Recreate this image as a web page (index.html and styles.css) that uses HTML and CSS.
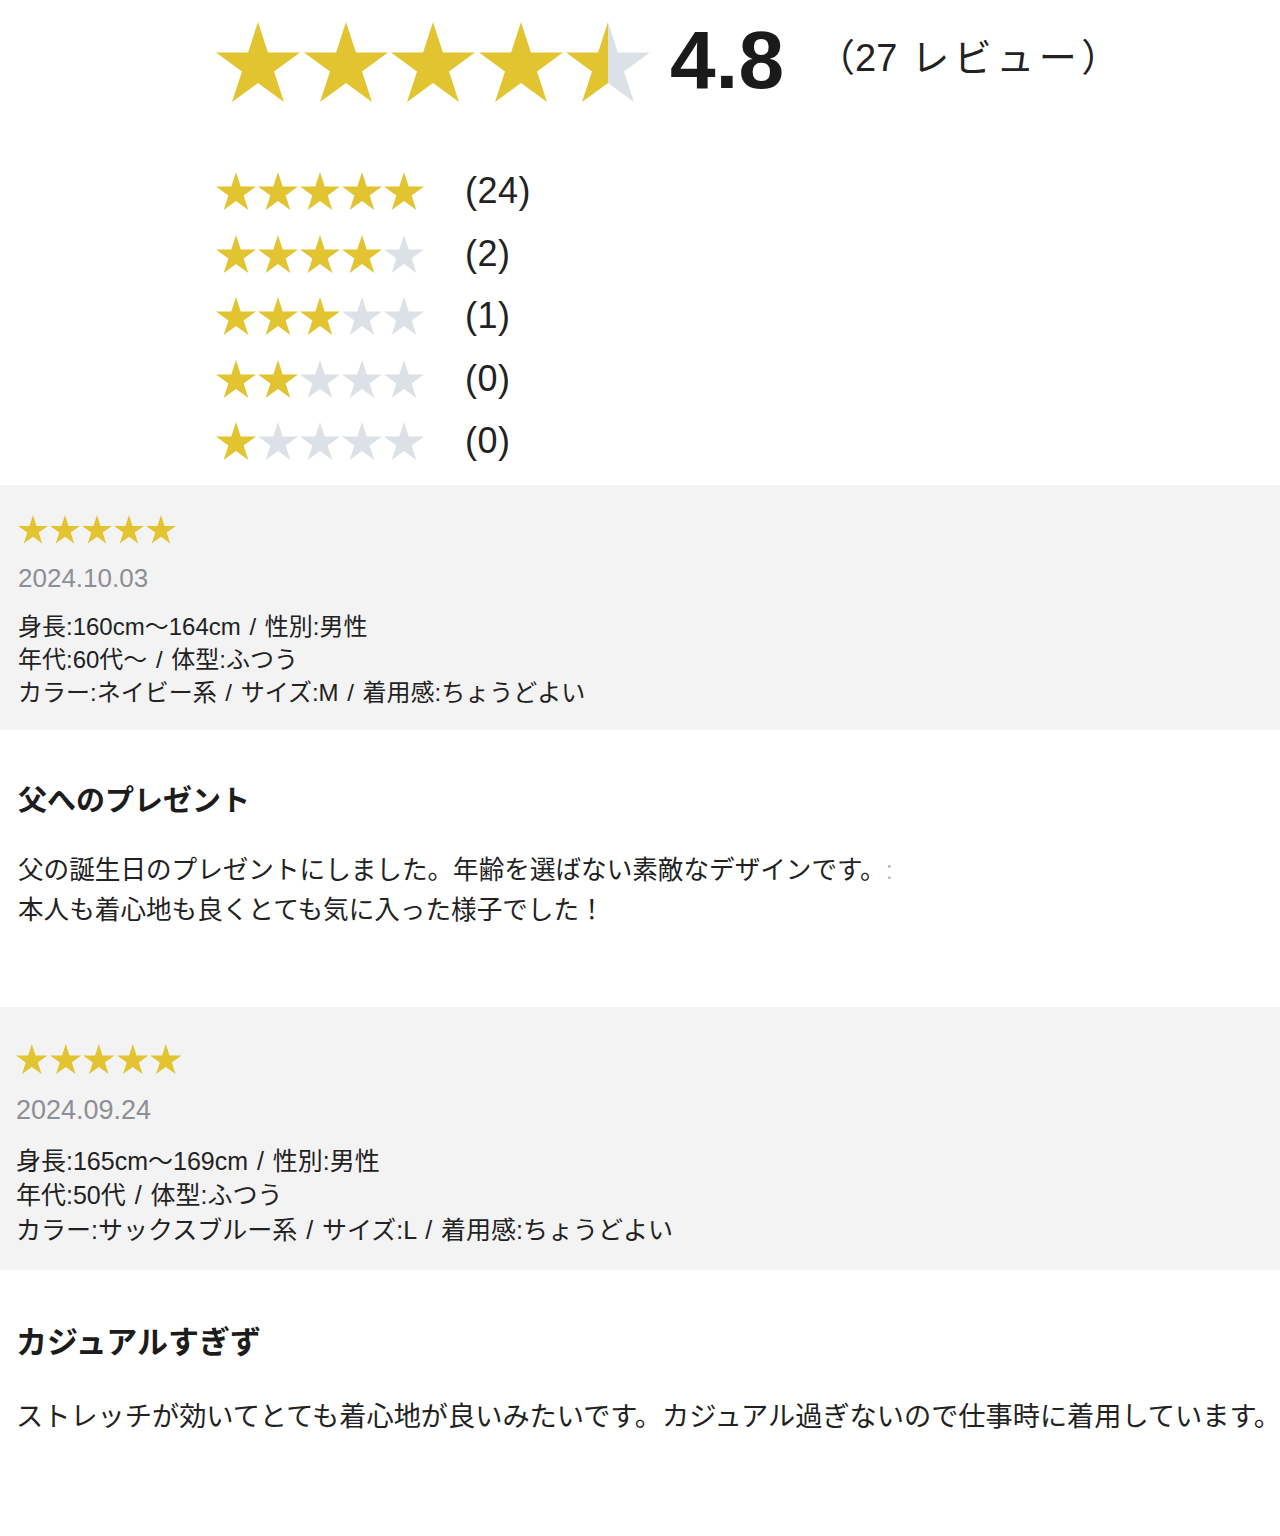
FILE: index.html
```html
<!DOCTYPE html>
<html lang="ja">
<head>
<meta charset="utf-8">
<title>レビュー</title>
<link rel="stylesheet" href="styles.css">
</head>
<body>
<svg class="sprite" aria-hidden="true">
  <symbol id="star" viewBox="0 0 100 95.1">
    <polygon points="50,0 61.8,36.32 100,36.32 69.1,58.77 80.9,95.1 50,72.65 19.1,95.1 30.9,58.77 0,36.32 38.2,36.32"/>
  </symbol>
</svg>

<section class="summary">
  <div class="summary-head">
    <div class="stars stars--xl">
      <svg class="star on" viewBox="0 0 100 95.1"><use href="#star"/></svg>
      <svg class="star on" viewBox="0 0 100 95.1"><use href="#star"/></svg>
      <svg class="star on" viewBox="0 0 100 95.1"><use href="#star"/></svg>
      <svg class="star on" viewBox="0 0 100 95.1"><use href="#star"/></svg>
      <svg class="star" viewBox="0 0 100 95.1">
        <defs>
          <linearGradient id="half">
            <stop offset="50.5%" stop-color="#e2c431"/>
            <stop offset="50.5%" stop-color="#dce1e8"/>
          </linearGradient>
        </defs>
        <use href="#star" fill="url(#half)"/>
      </svg>
    </div>
    <div class="score">4.8</div>
    <div class="count">（27<span class="count-label">レビュー</span>）</div>
  </div>

  <ul class="dist">
    <li class="dist-row">
      <div class="stars stars--md">
        <svg class="star on" viewBox="0 0 100 95.1"><use href="#star"/></svg>
        <svg class="star on" viewBox="0 0 100 95.1"><use href="#star"/></svg>
        <svg class="star on" viewBox="0 0 100 95.1"><use href="#star"/></svg>
        <svg class="star on" viewBox="0 0 100 95.1"><use href="#star"/></svg>
        <svg class="star on" viewBox="0 0 100 95.1"><use href="#star"/></svg>
      </div>
      <span class="dist-count">(24)</span>
    </li>
    <li class="dist-row">
      <div class="stars stars--md">
        <svg class="star on" viewBox="0 0 100 95.1"><use href="#star"/></svg>
        <svg class="star on" viewBox="0 0 100 95.1"><use href="#star"/></svg>
        <svg class="star on" viewBox="0 0 100 95.1"><use href="#star"/></svg>
        <svg class="star on" viewBox="0 0 100 95.1"><use href="#star"/></svg>
        <svg class="star off" viewBox="0 0 100 95.1"><use href="#star"/></svg>
      </div>
      <span class="dist-count">(2)</span>
    </li>
    <li class="dist-row">
      <div class="stars stars--md">
        <svg class="star on" viewBox="0 0 100 95.1"><use href="#star"/></svg>
        <svg class="star on" viewBox="0 0 100 95.1"><use href="#star"/></svg>
        <svg class="star on" viewBox="0 0 100 95.1"><use href="#star"/></svg>
        <svg class="star off" viewBox="0 0 100 95.1"><use href="#star"/></svg>
        <svg class="star off" viewBox="0 0 100 95.1"><use href="#star"/></svg>
      </div>
      <span class="dist-count">(1)</span>
    </li>
    <li class="dist-row">
      <div class="stars stars--md">
        <svg class="star on" viewBox="0 0 100 95.1"><use href="#star"/></svg>
        <svg class="star on" viewBox="0 0 100 95.1"><use href="#star"/></svg>
        <svg class="star off" viewBox="0 0 100 95.1"><use href="#star"/></svg>
        <svg class="star off" viewBox="0 0 100 95.1"><use href="#star"/></svg>
        <svg class="star off" viewBox="0 0 100 95.1"><use href="#star"/></svg>
      </div>
      <span class="dist-count">(0)</span>
    </li>
    <li class="dist-row">
      <div class="stars stars--md">
        <svg class="star on" viewBox="0 0 100 95.1"><use href="#star"/></svg>
        <svg class="star off" viewBox="0 0 100 95.1"><use href="#star"/></svg>
        <svg class="star off" viewBox="0 0 100 95.1"><use href="#star"/></svg>
        <svg class="star off" viewBox="0 0 100 95.1"><use href="#star"/></svg>
        <svg class="star off" viewBox="0 0 100 95.1"><use href="#star"/></svg>
      </div>
      <span class="dist-count">(0)</span>
    </li>
  </ul>
</section>

<article class="review review--a">
  <div class="review-meta">
    <div class="stars stars--sm">
      <svg class="star on" viewBox="0 0 100 95.1"><use href="#star"/></svg>
      <svg class="star on" viewBox="0 0 100 95.1"><use href="#star"/></svg>
      <svg class="star on" viewBox="0 0 100 95.1"><use href="#star"/></svg>
      <svg class="star on" viewBox="0 0 100 95.1"><use href="#star"/></svg>
      <svg class="star on" viewBox="0 0 100 95.1"><use href="#star"/></svg>
    </div>
    <p class="review-date">2024.10.03</p>
    <ul class="review-attrs">
      <li>身長:160cm～164cm / 性別:男性</li>
      <li>年代:60代～ / 体型:ふつう</li>
      <li>カラー:ネイビー系 / サイズ:M / 着用感:ちょうどよい</li>
    </ul>
  </div>
  <div class="review-body">
    <h3 class="review-title">父へのプレゼント</h3>
    <p class="review-text">父の誕生日のプレゼントにしました。年齢を選ばない素敵なデザインです。<span class="ghost">:</span><br>本人も着心地も良くとても気に入った様子でした！</p>
  </div>
</article>

<article class="review review--b">
  <div class="review-meta">
    <div class="stars stars--sm">
      <svg class="star on" viewBox="0 0 100 95.1"><use href="#star"/></svg>
      <svg class="star on" viewBox="0 0 100 95.1"><use href="#star"/></svg>
      <svg class="star on" viewBox="0 0 100 95.1"><use href="#star"/></svg>
      <svg class="star on" viewBox="0 0 100 95.1"><use href="#star"/></svg>
      <svg class="star on" viewBox="0 0 100 95.1"><use href="#star"/></svg>
    </div>
    <p class="review-date">2024.09.24</p>
    <ul class="review-attrs">
      <li>身長:165cm～169cm / 性別:男性</li>
      <li>年代:50代 / 体型:ふつう</li>
      <li>カラー:サックスブルー系 / サイズ:L / 着用感:ちょうどよい</li>
    </ul>
  </div>
  <div class="review-body">
    <h3 class="review-title">カジュアルすぎず</h3>
    <p class="review-text">ストレッチが効いてとても着心地が良いみたいです。カジュアル過ぎないので仕事時に着用しています。</p>
  </div>
</article>
</body>
</html>
```

FILE: styles.css
```css
* { box-sizing: border-box; }

html, body {
  margin: 0;
  padding: 0;
  background: #ffffff;
}

body {
  width: 1280px;
  font-family: "Liberation Sans", "Noto Sans CJK JP", sans-serif;
  color: #222222;
}

.sprite {
  display: block;
  width: 0;
  height: 0;
  overflow: hidden;
}

ul { list-style: none; margin: 0; padding: 0; }
p, h3 { margin: 0; }

/* ---------- stars ---------- */
.stars {
  display: flex;
  align-items: center;
}
.star { display: block; flex: none; }
.star.on { fill: #e2c431; }
.star.off { fill: #dce1e8; }

.stars--xl { gap: 3.5px; }
.stars--xl .star { width: 84px; height: 80px; }

.stars--md { gap: 2px; }
.stars--md .star { width: 40px; height: 38px; }

.stars--sm { gap: 2px; }

/* ---------- summary ---------- */
.summary {
  padding: 0 0 12.5px 216px;
}

.summary-head {
  height: 123px;
  display: flex;
  align-items: center;
}

.score {
  margin-left: 20px;
  font-size: 82px;
  font-weight: 700;
  line-height: 1;
  color: #1a1a1a;
  position: relative;
  top: -2px;
}

.count {
  margin-left: 33px;
  font-size: 38px;
  line-height: 1;
  color: #222;
  position: relative;
  top: -4px;
}

.count-label {
  margin-left: 14px;
  letter-spacing: 4.5px;
}

.dist {
  margin-top: 37px;
}

.dist-row {
  height: 62.5px;
  display: flex;
  align-items: center;
}

.dist-count {
  margin-left: 41px;
  font-size: 36px;
  line-height: 1;
  letter-spacing: 0.5px;
  color: #222;
}

/* ---------- reviews ---------- */
.review-meta {
  background: #f3f3f3;
}

.review-date {
  color: #8c8f95;
}

.review-attrs {
  word-spacing: 2px;
}

.review-title {
  font-weight: 700;
  color: #1c1c1c;
}

.ghost {
  color: #b8b8b8;
}

/* review A */
.review--a .review-meta {
  padding: 30px 18px 21.5px;
}
.review--a .stars--sm .star { width: 30px; height: 28.5px; }
.review--a .review-date {
  margin-top: 18.5px;
  font-size: 26px;
  line-height: 32px;
}
.review--a .review-attrs {
  margin-top: 15.5px;
  font-size: 24px;
  line-height: 33px;
}
.review--a .review-body {
  padding: 51px 18px 77px;
}
.review--a .review-title {
  font-size: 29px;
  line-height: 40px;
}
.review--a .review-text {
  margin-top: 29px;
  font-size: 25.6px;
  line-height: 40px;
}

/* review B (slightly larger scale) */
.review--b .review-meta {
  padding: 37px 16px 22.75px;
}
.review--b .stars--sm .star { width: 31.6px; height: 30px; }
.review--b .review-date {
  margin-top: 19px;
  font-size: 27px;
  line-height: 34px;
}
.review--b .review-attrs {
  margin-top: 16.75px;
  font-size: 25px;
  line-height: 34.5px;
}
.review--b .review-body {
  padding: 52px 16px 100px;
}
.review--b .review-title {
  font-size: 31px;
  line-height: 42px;
}
.review--b .review-text {
  margin-top: 32px;
  font-size: 27.2px;
  line-height: 42px;
  white-space: nowrap;
}
```
